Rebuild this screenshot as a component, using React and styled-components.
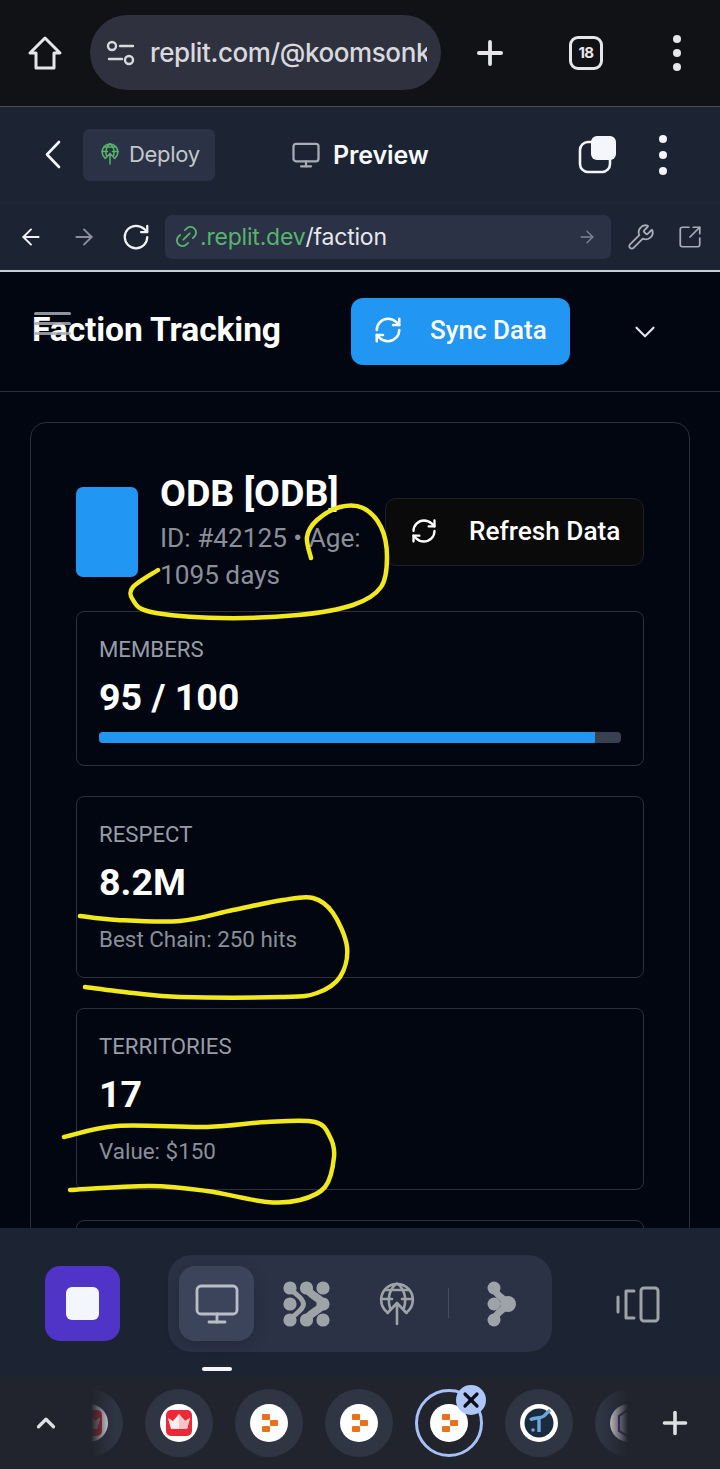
import React from "react";
import styled, { createGlobalStyle } from "styled-components";
import {
  Monitor, ArrowLeft, ArrowRight, RotateCw, Link2, Wrench,
  SquareArrowOutUpRight, RefreshCw, ChevronDown, ChevronUp, Plus, X,
} from "lucide-react";

const Global = createGlobalStyle`
  html, body { margin: 0; padding: 0; background: #020610; }
  * { box-sizing: border-box; }
`;

const Page = styled.div`
  position: relative;
  width: 720px;
  height: 1469px;
  display: flex;
  flex-direction: column;
  overflow: hidden;
  font-family: Roboto, "Liberation Sans", sans-serif;
  color: #fff;
`;

/* browser chrome */
const ChromeBar = styled.header`
  height: 107px;
  flex: none;
  display: grid;
  grid-template-columns: 90px 351px 98px 94px 87px;
  align-items: center;
  justify-items: center;
  background: #111216;
  border-bottom: 1px solid #4b4e53;
  padding-bottom: 1px;
  color: #e6e6e8;
`;
const AddressPill = styled.div`
  width: 351px;
  height: 75px;
  border-radius: 38px;
  background: #2f323e;
  display: flex;
  align-items: center;
  padding: 0 14px 0 16px;
  gap: 14px;
  overflow: hidden;
`;
const AddressText = styled.span`
  font-family: Inter, "Liberation Sans", sans-serif;
  font-size: 26px;
  font-weight: 500;
  letter-spacing: -0.4px;
  color: #d8d9de;
  white-space: nowrap;
  overflow: hidden;
  flex: 1;
`;
const TabCount = styled.div`
  width: 34px;
  height: 34px;
  border: 3px solid #e6e6e8;
  border-radius: 9px;
  display: flex;
  align-items: center;
  justify-content: center;
  font-family: Inter, sans-serif;
  font-size: 15px;
  font-weight: 700;
  letter-spacing: -0.5px;
`;
const Dots = styled.div`
  display: flex;
  flex-direction: column;
  align-items: center;
  gap: ${(p) => p.$gap || 6}px;
  & > i {
    display: block;
    width: ${(p) => p.$size || 8}px;
    height: ${(p) => p.$size || 8}px;
    border-radius: 50%;
    background: ${(p) => p.$color || "#e6e6e8"};
  }
`;

/* replit header */
const ReplitBar = styled.div`
  height: 95px;
  flex: none;
  display: flex;
  align-items: center;
  background: #1c2333;
  padding: 0 0 0 44px;
  color: #f5f9fc;
`;
const BackSlot = styled.div`
  width: 18px;
  display: flex;
  margin-right: 21px;
  color: #f5f9fc;
`;
const DeployButton = styled.div`
  width: 132px;
  height: 52px;
  border-radius: 7px;
  background: #2b3245;
  display: flex;
  align-items: center;
  padding: 0 0 1px 18px;
  gap: 10px;
  color: #c2c8cc;
  font-family: Inter, sans-serif;
  font-size: 22px;
  letter-spacing: -0.3px;
`;
const PreviewTitle = styled.div`
  margin-left: 76px;
  display: flex;
  align-items: center;
  gap: 12px;
  color: #f5f9fc;
  font-family: Inter, sans-serif;
  font-size: 25px;
  font-weight: 600;
  letter-spacing: -0.1px;
  & > svg { color: #a8adb5; }
`;
const RightTools = styled.div`
  margin-left: auto;
  display: flex;
  align-items: center;
  gap: 43px;
  padding-right: 53px;
`;

/* url row */
const UrlRow = styled.div`
  height: 70px;
  flex: none;
  display: flex;
  align-items: center;
  background: #1c2333;
  border-top: 1px solid #222a3a;
  border-bottom: 2px solid #c9ccd1;
  padding-left: 18px;
  color: #eef0f3;
`;
const NavIcon = styled.div`
  display: flex;
  color: ${(p) => p.$color || "#f0f2f5"};
  margin-left: ${(p) => p.$ml || 0}px;
`;
const ChainIcon = styled(Link2)`
  transform: rotate(-45deg);
`;
const UrlField = styled.div`
  width: 446px;
  height: 44px;
  margin-left: 14px;
  border-radius: 7px;
  background: #2b3245;
  display: flex;
  align-items: center;
  padding: 0 14px 0 8px;
  font-family: Inter, sans-serif;
  font-size: 23px;
  letter-spacing: -0.2px;
  color: #e6e8ec;
`;
const UrlGreen = styled.span`
  color: #58b36e;
`;
const UrlArrow = styled.div`
  margin-left: auto;
  display: flex;
  color: #7d8594;
`;

/* page */
const Content = styled.main`
  flex: 1;
  min-height: 0;
  overflow: hidden;
  background: #020610;
`;
const TopBar = styled.div`
  position: relative;
  height: 120px;
  display: flex;
  align-items: center;
  border-bottom: 1px solid #2c3038;
  padding-left: 32px;
`;
const Hamburger = styled.div`
  position: absolute;
  left: 34px;
  top: 40px;
  width: 37px;
  display: flex;
  flex-direction: column;
  gap: 7px;
  & > i {
    display: block;
    height: 3px;
    border-radius: 2px;
    background: #a9adb4;
    opacity: 0.85;
  }
`;
const PageTitle = styled.h1`
  width: 319px;
  margin: 0 0 4px;
  font-size: 33.6px;
  line-height: 40px;
  font-weight: 700;
  letter-spacing: -0.1px;
`;
const SyncButton = styled.button`
  width: 219px;
  height: 67px;
  border: none;
  border-radius: 12px;
  background: #2196f3;
  color: #fff;
  display: flex;
  align-items: center;
  padding: 0 0 2px 22px;
  gap: 27px;
  font-family: inherit;
  font-size: 26px;
  font-weight: 500;
  margin-bottom: 1px;
`;
const MenuChevron = styled.div`
  margin: 0 0 0 58px;
  display: flex;
  color: #e4e6ea;
`;
const FactionCard = styled.section`
  margin: 30px 30px 0;
  padding: 45px;
  border: 1px solid #2c3038;
  border-radius: 16px;
  background: #020610;
`;
const FactionHead = styled.div`
  display: flex;
  align-items: center;
  margin-bottom: 17px;
`;
const Emblem = styled.div`
  width: 62px;
  height: 90px;
  flex: none;
  border-radius: 7px;
  background: #2196f3;
  margin: 2px 22px 0 0;
`;
const FactionInfo = styled.div`
  width: 225px;
  flex: none;
`;
const FactionName = styled.h2`
  margin: 2px 0 4px;
  font-size: 37.6px;
  line-height: 46px;
  font-weight: 700;
`;
const FactionMeta = styled.div`
  font-size: 26.2px;
  line-height: 37px;
  color: #8a8f9a;
`;
const RefreshButton = styled.button`
  width: 259px;
  height: 68px;
  border: 1px solid #1d2027;
  border-radius: 11px;
  background: #0a0a0a;
  color: #fff;
  display: flex;
  align-items: center;
  padding: 0 0 3px 24px;
  gap: 31px;
  font-family: inherit;
  font-size: 26.2px;
  font-weight: 500;
  margin-top: 2px;
`;
const StatList = styled.div`
  display: grid;
  gap: 30px;
`;
const StatCard = styled.article`
  padding: 22px 22px 23px;
  border: 1px solid #2c3038;
  border-radius: 8px;
  min-height: ${(p) => p.$minH || 0}px;
`;
const StatLabel = styled.div`
  font-size: 22.2px;
  line-height: 30px;
  color: #969da9;
  text-transform: uppercase;
`;
const StatValue = styled.div`
  margin-top: 8px;
  font-size: 37.6px;
  line-height: 50px;
  font-weight: 700;
`;
const StatNote = styled.div`
  margin-top: 17px;
  font-size: 22.4px;
  line-height: 30px;
  color: #8a8f9a;
`;
const Progress = styled.div`
  margin: 10px 0 -1px;
  height: 11px;
  border-radius: 4px;
  background: #374151;
  overflow: hidden;
`;
const ProgressFill = styled.div`
  height: 100%;
  background: #2196f3;
`;
const Scribbles = styled.svg`
  position: absolute;
  inset: 0;
  width: 720px;
  height: 1469px;
  pointer-events: none;
`;

/* bottom toolbar */
const DockBar = styled.nav`
  height: 149px;
  flex: none;
  position: relative;
  background: #1c2333;
  display: flex;
  align-items: flex-start;
  padding: 27px 0 0 45px;
`;
const StopButton = styled.div`
  width: 75px;
  height: 75px;
  margin-top: 11px;
  border-radius: 15px;
  background: #5034c8;
  display: flex;
  align-items: center;
  justify-content: center;
  & > i {
    display: block;
    width: 33px;
    height: 33px;
    border-radius: 6px;
    background: #f4f6fd;
  }
`;
const ModeGroup = styled.div`
  width: 384px;
  height: 97px;
  margin-left: 48px;
  padding: 11px;
  border-radius: 24px;
  background: #2b3245;
  display: flex;
  align-items: flex-start;
  gap: 15px;
  color: #9ea3a8;
`;
const ModeTab = styled.div`
  width: 75px;
  height: 75px;
  border-radius: 16px;
  background: ${(p) => (p.$active ? "#3c445c" : "transparent")};
  box-shadow: ${(p) => (p.$active ? "0 4px 14px rgba(20,24,36,0.3)" : "none")};
  display: flex;
  align-items: center;
  justify-content: center;
  color: ${(p) => (p.$active ? "#b9bec6" : "#9ea3a8")};
`;
const ModeDivider = styled.div`
  width: 1px;
  height: 30px;
  margin: 22px 0 0 -1px;
  background: #454d62;
`;
const DeviceSlot = styled.div`
  margin: 31px 0 0 64px;
  display: flex;
  color: #9ea3a8;
`;
const DockIndicator = styled.div`
  position: absolute;
  left: 202px;
  bottom: 6px;
  width: 30px;
  height: 4px;
  border-radius: 2px;
  background: #f4f6fd;
`;

/* tab strip */
const TabStrip = styled.div`
  height: 92px;
  flex: none;
  background: #21242d;
  display: flex;
  align-items: center;
  color: #e4e5e8;
`;
const StripEdge = styled.div`
  width: ${(p) => p.$w}px;
  flex: none;
  display: flex;
  justify-content: center;
  padding-left: ${(p) => p.$pl || 0}px;
  color: #dfe0e3;
`;
const BubbleScroller = styled.div`
  width: 537px;
  height: 92px;
  flex: none;
  overflow: hidden;
  display: flex;
  align-items: center;
  -webkit-mask-image: linear-gradient(90deg, transparent 0, #000 24px, #000 510px, transparent 537px);
  mask-image: linear-gradient(90deg, transparent 0, #000 24px, #000 510px, transparent 537px);
`;
const BubbleTrack = styled.div`
  display: flex;
  gap: 22px;
  margin-left: -36px;
  flex: none;
`;
const Bubble = styled.div`
  position: relative;
  width: 68px;
  height: 68px;
  flex: none;
  border-radius: 50%;
  background: ${(p) => (p.$active ? "transparent" : "#303544")};
  border: ${(p) => (p.$active ? "3px solid #a8c0f5" : "none")};
  display: flex;
  align-items: center;
  justify-content: center;
`;
const CloseBadge = styled.div`
  position: absolute;
  top: -7px;
  right: -6px;
  width: 30px;
  height: 30px;
  border-radius: 50%;
  background: #aec6f8;
  color: #0c0f18;
  display: flex;
  align-items: center;
  justify-content: center;
`;

/* drawings */
const HomeIcon = () => (
  <svg width="36" height="36" viewBox="0 0 36 36" fill="none" stroke="currentColor" strokeWidth="3" strokeLinejoin="round">
    <path d="M18 3 L33 18 H27 V33 H9 V18 H3 Z" />
  </svg>
);
const TuneIcon = () => (
  <svg width="30" height="26" viewBox="0 0 30 26" fill="none" stroke="#d8d9de" strokeWidth="2.4" strokeLinecap="round">
    <circle cx="6" cy="6" r="4" />
    <path d="M14 6 H27" />
    <circle cx="23" cy="20" r="4" />
    <path d="M3 19 H16" />
  </svg>
);
const BackChevron = () => (
  <svg width="18" height="29" viewBox="0 0 18 29" fill="none" stroke="currentColor" strokeWidth="2.6" strokeLinecap="round" strokeLinejoin="round">
    <path d="M15 2 L3 14.5 L15 27" />
  </svg>
);
const DeployGlobe = ({ height, color, sw }) => (
  <svg width={(height * 36) / 44} height={height} viewBox="0 0 36 44" fill="none" stroke={color} strokeWidth={sw} strokeLinecap="round" strokeLinejoin="round">
    <path d="M8 30 A15.8 15.8 0 1 1 28 30" />
    <path d="M2 17 H13 M23 17 H34 M6 8 H30" />
    <path d="M11 26 C8 16 11 6 18 1.5 C25 6 28 16 25 26" />
    <path d="M18 42 V21 M8.5 31 L18 21 L27.5 31" />
  </svg>
);
const StackIcon = () => (
  <svg width="38" height="38" viewBox="0 0 38 38" fill="none">
    <rect x="2" y="6" width="30" height="30" rx="8" stroke="#f4f6fb" strokeWidth="2.6" />
    <rect x="13" y="0" width="25" height="24" rx="6" fill="#f4f6fb" />
  </svg>
);
const FlowIcon = () => (
  <svg width="48" height="46" viewBox="0 0 48 46" fill="none" stroke="currentColor" strokeLinecap="round" strokeLinejoin="round">
    <g fill="currentColor" stroke="none">
      {[7, 23.5, 40].map((x) => <circle key={`t${x}`} cx={x} cy="7" r="6.6" />)}
      <circle cx="7" cy="23" r="6.6" />
      <circle cx="40" cy="23" r="6.6" />
      {[7, 23.5, 40].map((x) => <circle key={`b${x}`} cx={x} cy="39" r="6.6" />)}
    </g>
    <path d="M7 7 C12 14 20 16 20.5 23 C20 30 12 32 7 39" strokeWidth="5" />
    <path d="M23.5 7 C26 14 38 17 40 23 C38 29 26 32 23.5 39" strokeWidth="8" />
  </svg>
);
const BranchIcon = () => (
  <svg width="32" height="46" viewBox="0 0 32 46" fill="none" stroke="currentColor" strokeLinecap="round">
    <g fill="currentColor" stroke="none">
      <circle cx="8" cy="7" r="6.5" />
      <circle cx="8" cy="23" r="6.5" />
      <circle cx="8" cy="39" r="6.5" />
      <circle cx="22" cy="23" r="8" />
    </g>
    <path d="M8 7 C10 15 18 17 22 23 C18 29 10 31 8 39" strokeWidth="7" />
  </svg>
);
const DeviceIcon = () => (
  <svg width="44" height="37" viewBox="0 0 44 37" fill="none" stroke="currentColor" strokeWidth="3" strokeLinecap="round" strokeLinejoin="round">
    <rect x="25" y="2" width="17" height="33" rx="3" />
    <path d="M18 5 H10 V32 H18" />
    <path d="M2 11 V26" />
  </svg>
);

const CrownAvatar = () => (
  <svg width="38" height="38" viewBox="0 0 38 38">
    <circle cx="19" cy="19" r="19" fill="#fff" />
    <rect x="6" y="6" width="26" height="26" rx="5" fill="#ec2a37" />
    <path d="M8 14 L13 17 L19 10 L25 17 L30 14 L27 25 H11 Z" fill="#fff" opacity="0.92" />
    <path d="M19 10 L25 17 L30 14 L27 25 H19 Z" fill="#f7c4c8" />
  </svg>
);
const BlocksAvatar = () => (
  <svg width="38" height="38" viewBox="0 0 38 38">
    <circle cx="19" cy="19" r="19" fill="#fff" />
    <g fill="#e8711a">
      <rect x="12" y="10" width="8" height="6" rx="1" />
      <rect x="20" y="16" width="8" height="6" rx="1" />
      <rect x="12" y="22" width="8" height="6" rx="1" />
    </g>
  </svg>
);
const TAvatar = () => (
  <svg width="38" height="38" viewBox="0 0 38 38" fill="none">
    <circle cx="19" cy="19" r="19" fill="#fff" />
    <circle cx="19" cy="19" r="14.5" fill="#1a2b3d" />
    <path d="M10 16 C14 13 20 15 24 12 L30 6 M19 15 V28" stroke="#6ea6d8" strokeWidth="3.4" />
    <circle cx="13" cy="26" r="1.8" fill="#6ea6d8" />
  </svg>
);
const HexAvatar = () => (
  <svg width="38" height="38" viewBox="0 0 38 38" fill="none">
    <circle cx="19" cy="19" r="19" fill="#fff" />
    <path d="M19 5 L31 12 V26 L19 33 L9 27 V12 Z" stroke="#5a34a8" strokeWidth="2.2" />
  </svg>
);

const smooth = (pts) => {
  let d = `M${pts[0][0]} ${pts[0][1]}`;
  for (let i = 0; i < pts.length - 1; i++) {
    const p0 = pts[i - 1] || pts[i];
    const p1 = pts[i];
    const p2 = pts[i + 1];
    const p3 = pts[i + 2] || p2;
    d += ` C${p1[0] + (p2[0] - p0[0]) / 6} ${p1[1] + (p2[1] - p0[1]) / 6} ${p2[0] - (p3[0] - p1[0]) / 6} ${p2[1] - (p3[1] - p1[1]) / 6} ${p2[0]} ${p2[1]}`;
  }
  return d;
};
const strokes = [
  [[311, 558], [307, 537], [317, 520], [340, 507], [363, 508], [381, 527], [387, 557], [381, 587], [353, 605], [298, 615], [220, 618], [151, 612], [133, 600], [133, 587], [158, 570]],
  [[80, 916], [117, 920], [180, 921], [233, 910], [283, 900], [313, 898], [333, 913], [347, 947], [340, 977], [317, 993], [283, 997], [180, 997], [133, 993], [85, 987]],
  [[64, 1137], [117, 1126], [207, 1127], [267, 1122], [315, 1122], [330, 1137], [334, 1157], [325, 1187], [300, 1200], [267, 1202], [207, 1191], [150, 1186], [70, 1190]],
];

const avatars = [CrownAvatar, CrownAvatar, BlocksAvatar, BlocksAvatar, BlocksAvatar, TAvatar, HexAvatar];

export default function App() {
  return (
    <Page>
      <Global />
      <ChromeBar>
        <HomeIcon />
        <AddressPill>
          <TuneIcon />
          <AddressText>replit.com/@koomsonkwame</AddressText>
        </AddressPill>
        <Plus size={38} strokeWidth={2.4} />
        <TabCount>18</TabCount>
        <Dots><i /><i /><i /></Dots>
      </ChromeBar>

      <ReplitBar>
        <BackSlot><BackChevron /></BackSlot>
        <DeployButton>
          <DeployGlobe height={22} color="#58b36e" sw={3} />
          Deploy
        </DeployButton>
        <PreviewTitle>
          <Monitor size={30} strokeWidth={1.8} />
          Preview
        </PreviewTitle>
        <RightTools>
          <StackIcon />
          <Dots $size={8} $gap={8} $color="#f4f6fb"><i /><i /><i /></Dots>
        </RightTools>
      </ReplitBar>

      <UrlRow>
        <NavIcon><ArrowLeft size={26} strokeWidth={1.8} /></NavIcon>
        <NavIcon $ml={27} $color="#8a909c"><ArrowRight size={26} strokeWidth={1.8} /></NavIcon>
        <NavIcon $ml={24}><RotateCw size={30} strokeWidth={1.8} /></NavIcon>
        <UrlField>
          <NavIcon $color="#58b36e"><ChainIcon size={27} strokeWidth={1.6} /></NavIcon>
          <UrlGreen>.replit.dev</UrlGreen>
          /faction
          <UrlArrow><ArrowRight size={20} strokeWidth={1.6} /></UrlArrow>
        </UrlField>
        <NavIcon $ml={16} $color="#a8adb5"><Wrench size={28} strokeWidth={1.6} /></NavIcon>
        <NavIcon $ml={22} $color="#a8adb5"><SquareArrowOutUpRight size={26} strokeWidth={1.6} /></NavIcon>
      </UrlRow>

      <Content>
        <TopBar>
          <PageTitle>Faction Tracking</PageTitle>
          <Hamburger><i /><i /><i /></Hamburger>
          <SyncButton>
            <RefreshCw size={30} strokeWidth={2} />
            Sync Data
          </SyncButton>
          <MenuChevron><ChevronDown size={34} strokeWidth={1.5} /></MenuChevron>
        </TopBar>
        <FactionCard>
          <FactionHead>
            <Emblem />
            <FactionInfo>
              <FactionName>ODB [ODB]</FactionName>
              <FactionMeta>ID: #42125 • Age: 1095 days</FactionMeta>
            </FactionInfo>
            <RefreshButton>
              <RefreshCw size={28} strokeWidth={2} />
              Refresh Data
            </RefreshButton>
          </FactionHead>
          <StatList>
            <StatCard>
              <StatLabel>Members</StatLabel>
              <StatValue>95 / 100</StatValue>
              <Progress><ProgressFill style={{ width: `${(95 / 100) * 100}%` }} /></Progress>
            </StatCard>
            <StatCard>
              <StatLabel>Respect</StatLabel>
              <StatValue>8.2M</StatValue>
              <StatNote>Best Chain: 250 hits</StatNote>
            </StatCard>
            <StatCard>
              <StatLabel>Territories</StatLabel>
              <StatValue>17</StatValue>
              <StatNote>Value: $150</StatNote>
            </StatCard>
            <StatCard $minH={180} />
          </StatList>
        </FactionCard>
      </Content>

      <DockBar>
        <StopButton><i /></StopButton>
        <ModeGroup>
          <ModeTab $active><Monitor size={48} strokeWidth={1.4} /></ModeTab>
          <ModeTab><FlowIcon /></ModeTab>
          <ModeTab><DeployGlobe height={44} color="currentColor" sw={2.6} /></ModeTab>
          <ModeDivider />
          <ModeTab><BranchIcon /></ModeTab>
        </ModeGroup>
        <DeviceSlot><DeviceIcon /></DeviceSlot>
        <DockIndicator />
      </DockBar>

      <TabStrip>
        <StripEdge $w={91}><ChevronUp size={30} strokeWidth={2.6} /></StripEdge>
        <BubbleScroller>
          <BubbleTrack>
            {avatars.map((Avatar, i) => (
              <Bubble key={i} $active={i === 4}>
                <Avatar />
                {i === 4 && <CloseBadge><X size={24} strokeWidth={3.2} /></CloseBadge>}
              </Bubble>
            ))}
          </BubbleTrack>
        </BubbleScroller>
        <StripEdge $w={92} $pl={2}><Plus size={36} strokeWidth={2.4} /></StripEdge>
      </TabStrip>

      <Scribbles viewBox="0 0 720 1469" fill="none" stroke="#f2e81e" strokeWidth="4.5" strokeLinecap="round" strokeLinejoin="round">
        {strokes.map((s, i) => <path key={i} d={smooth(s)} />)}
      </Scribbles>
    </Page>
  );
}
